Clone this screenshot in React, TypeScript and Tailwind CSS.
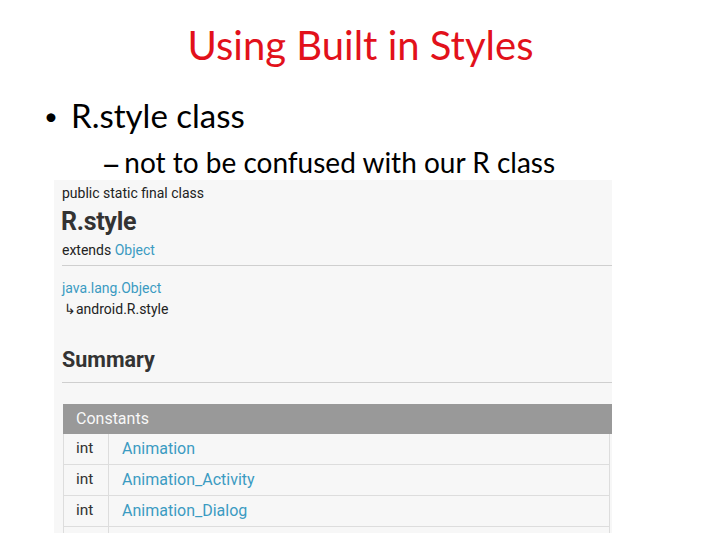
import * as React from "react";

const rows = ["Animation", "Animation_Activity", "Animation_Dialog"];

export default function App() {
  return (
    <div className="w-[720px] h-[540px] bg-white overflow-hidden flex flex-col">
      {/* Slide title */}
      <h1
        className="text-center text-[40px] leading-none text-[#e2111b] pt-[25px] pl-[1px]"
        style={{ fontFamily: "Lato, 'Open Sans', sans-serif" }}
      >
        Using Built in Styles
      </h1>

      {/* Bullets */}
      <div className="mt-[34px] flex items-center pl-[44px] text-black" style={{ fontFamily: "Lato, 'Open Sans', sans-serif" }}>
        <span className="text-[24px] leading-none w-[27px]">•</span>
        <span className="text-[33px] leading-none">R.style class</span>
      </div>
      <div className="mt-[16px] h-[28px] flex items-center pl-[101px] text-black" style={{ fontFamily: "Lato, 'Open Sans', sans-serif" }}>
        <span className="text-[35px] leading-[28px]">–</span>
        <span className="text-[28px] leading-[28px] ml-[3px]">not to be confused with our R class</span>
      </div>

      {/* Docs screenshot */}
      <div
        className="mt-[4px] ml-[54px] w-[558px] h-[353px] bg-[#f7f7f7] overflow-hidden flex flex-col"
        style={{ fontFamily: "Roboto, 'Liberation Sans', sans-serif" }}
      >
        <div className="pl-[8px] pt-[4px] text-[14px] leading-[18px] text-[#222]">public static final class</div>
        <div className="pl-[7px] pt-[5px] text-[25px] leading-[30px] font-bold text-[#333] tracking-[-0.3px]">R.style</div>
        <div className="pl-[8px] pt-[4px] text-[14px] leading-[18px] text-[#222]">
          extends <span className="text-[#3b9bc2]">Object</span>
        </div>
        <div className="ml-[8px] mt-[6px] border-t border-[#cfcfcf]" />

        <div className="pl-[8px] pt-[13px] text-[14px] leading-[18px] text-[#3b9bc2]">java.lang.Object</div>
        <div className="pl-[10px] pt-[3px] text-[14px] leading-[18px] text-[#222]">↳android.R.style</div>

        <div className="pl-[8px] pt-[30px] text-[21.5px] leading-[24px] font-bold text-[#333]">Summary</div>
        <div className="ml-[8px] mt-[10px] border-t border-[#cfcfcf]" />

        {/* Constants table */}
        <div className="ml-[9px] mt-[21px] w-[549px]">
          <div className="h-[30px] bg-[#999] flex items-center pl-[13px] text-[16px] text-white/95">Constants</div>
          <div className="w-[547px] border-r border-[#ddd]">
            {rows.map((name) => (
              <div key={name} className="h-[31px] flex border-b border-l border-[#ddd]">
                <div className="w-[45px] border-r border-[#ddd] flex items-center pl-[12px] text-[15.5px] text-[#333]">int</div>
                <div className="flex items-center pl-[13px] text-[16px] text-[#3b9bc2]">{name}</div>
              </div>
            ))}
            <div className="h-[10px] flex border-l border-[#ddd]">
              <div className="w-[45px] border-r border-[#ddd]" />
            </div>
          </div>
        </div>
      </div>
    </div>
  );
}
